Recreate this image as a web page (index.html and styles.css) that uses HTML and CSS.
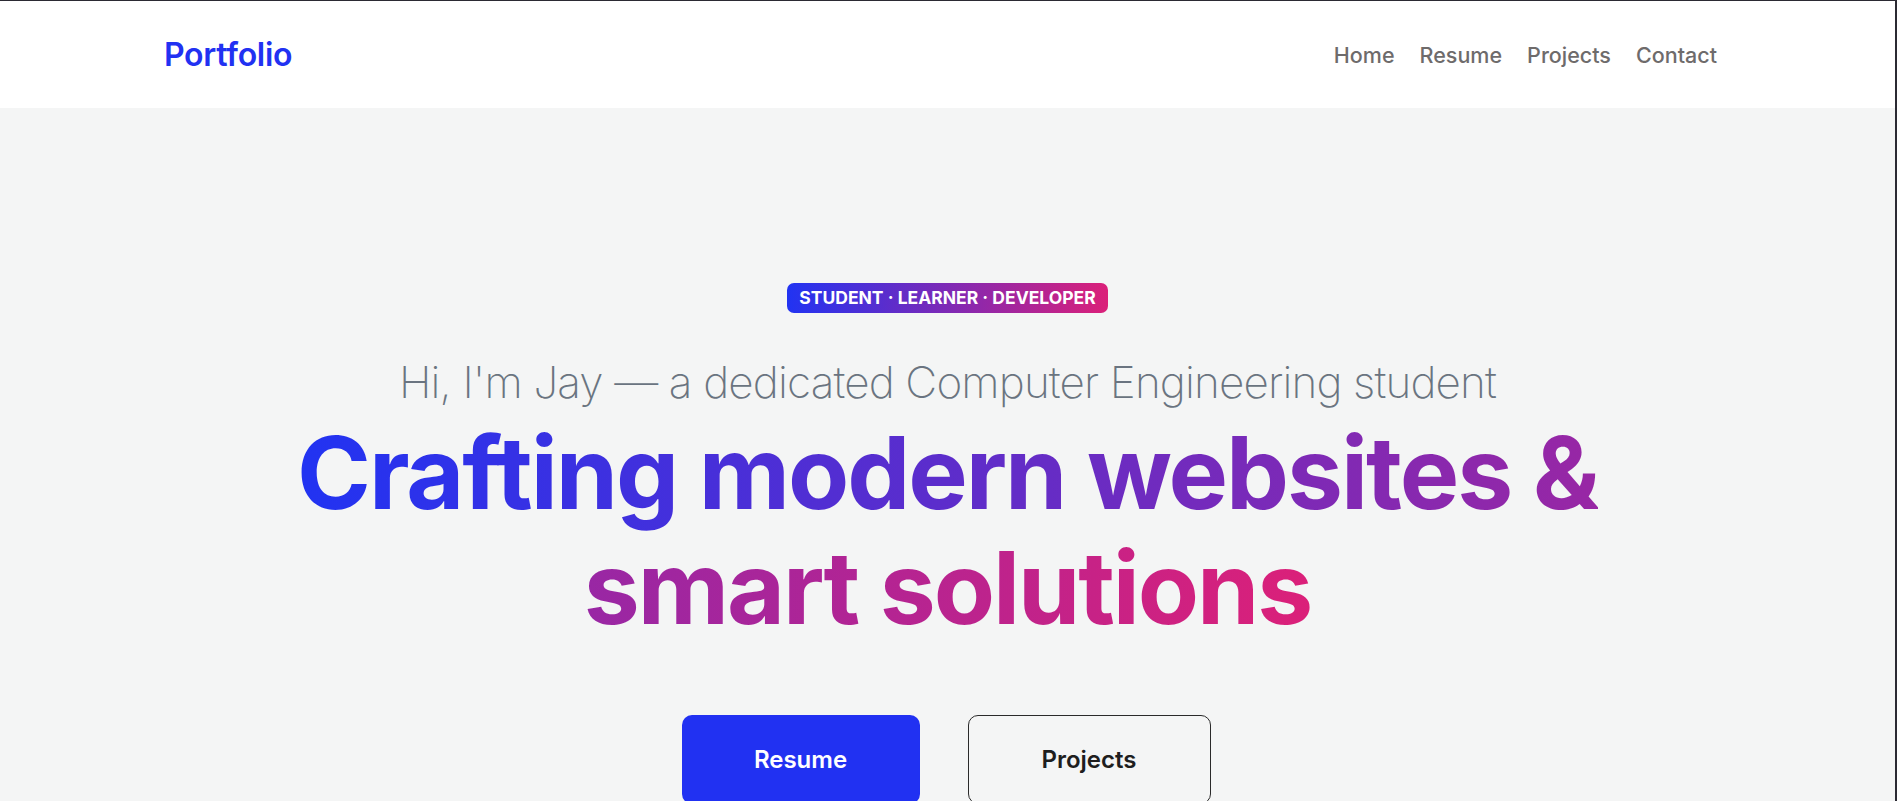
FILE: index.html
```html
<!DOCTYPE html>
<html lang="en">
<head>
<meta charset="utf-8">
<title>Portfolio</title>
<link rel="stylesheet" href="styles.css">
</head>
<body>
<header class="nav">
  <div class="nav-inner">
    <a class="logo" href="#">Portfolio</a>
    <nav class="links">
      <a href="#">Home</a>
      <a href="#">Resume</a>
      <a href="#">Projects</a>
      <a href="#">Contact</a>
    </nav>
  </div>
</header>
<main class="hero">
  <span class="badge">STUDENT · LEARNER · DEVELOPER</span>
  <p class="intro">Hi, I'm Jay — a dedicated Computer Engineering student</p>
  <h1 class="title"><span class="grad">Crafting modern websites &amp; smart solutions</span></h1>
  <div class="actions">
    <a class="btn btn-primary" href="#">Resume</a>
    <a class="btn btn-outline" href="#">Projects</a>
  </div>
</main>
</body>
</html>
```

FILE: styles.css
```css
* { box-sizing: border-box; }
html { background: #2b2a33; }
body {
  margin: 0;
  border-top: 1px solid #2b2a33;
  border-right: 2px solid #2b2a33;
  background: #f4f5f5;
  font-family: Inter, "Open Sans", sans-serif;
  height: 801px;
  overflow: hidden;
}
a { text-decoration: none; }

.nav {
  background: #ffffff;
  height: 107px;
  display: flex;
  align-items: center;
}
.nav-inner {
  flex: 1;
  display: flex;
  align-items: center;
  justify-content: space-between;
  padding: 0 178px 0 164px;
}
.logo {
  color: #2131f2;
  font-size: 32px;
  font-weight: 600;
  letter-spacing: -0.3px;
}
.links { display: flex; gap: 25px; }
.links a {
  color: #6e6b6b;
  font-size: 21.5px;
  font-weight: 500;
}

.hero {
  text-align: center;
  padding-top: 175px;
}
.badge {
  display: inline-block;
  height: 30px;
  line-height: 30px;
  padding: 0 12px;
  border-radius: 7px;
  background: linear-gradient(90deg, #2133f2, #db2079);
  color: #fff;
  font-size: 17.5px;
  font-weight: 700;
}
.intro {
  margin: 43px 0 0;
  font-size: 44px;
  line-height: 1.2;
  font-weight: 250;
  color: #6a7480;
  letter-spacing: -0.85px;
}
.title {
  max-width: 1400px;
  margin: 6px auto 0;
  font-size: 100px;
  line-height: 115px;
  font-weight: 700;
  letter-spacing: -2.05px;
}
.grad {
  background: linear-gradient(90deg, #2133f2, #db2079);
  -webkit-background-clip: text;
  background-clip: text;
  color: transparent;
}
.actions {
  margin-top: 70px;
  display: flex;
  justify-content: center;
  gap: 48px;
  padding-right: 3px;
}
.btn {
  display: flex;
  align-items: center;
  justify-content: center;
  height: 89px;
  border-radius: 10px;
  font-size: 24px;
  font-weight: 600;
}
.btn-primary {
  width: 238px;
  background: #2131f2;
  color: #fff;
}
.btn-outline {
  width: 243px;
  border: 1px solid #2a2a2a;
  color: #1e1e1e;
}
```
